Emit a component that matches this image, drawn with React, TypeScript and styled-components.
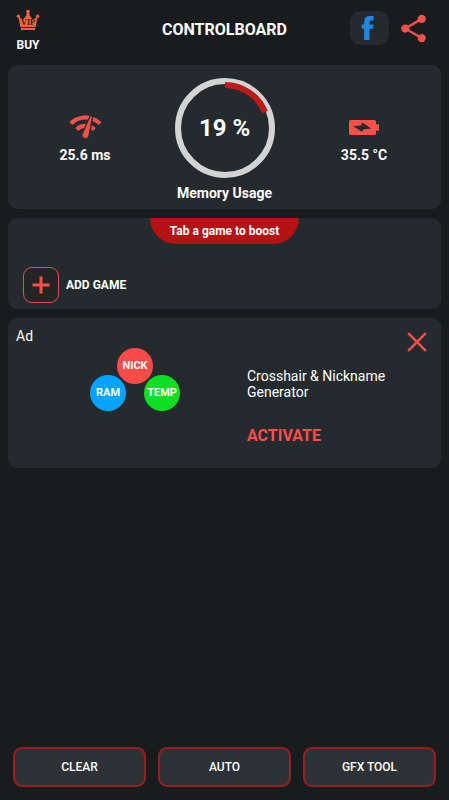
import React from "react";
import styled, { createGlobalStyle } from "styled-components";
import { MdNetworkCheck, MdShare } from "react-icons/md";

const GlobalStyle = createGlobalStyle`
  * { box-sizing: border-box; }
  body {
    margin: 0;
    background: #181c1f;
    color: #fff;
    font-family: Roboto, "Liberation Sans", sans-serif;
  }
  button { font: inherit; color: inherit; background: none; border: 0; padding: 0; cursor: pointer; }
  svg { display: block; }
`;

const Page = styled.div`
  min-height: 100vh;
  display: flex;
  flex-direction: column;
`;

const Header = styled.header`
  height: 65px;
  padding: 0 16px;
  display: grid;
  grid-template-columns: 1fr auto 1fr;
`;

const BuyButton = styled.button`
  justify-self: start;
  align-self: start;
  margin-top: 9px;
  display: flex;
  flex-direction: column;
  align-items: center;
  gap: 6px;
  font-size: 12px;
  line-height: 16px;
  font-weight: 700;
`;

const Title = styled.h1`
  margin: 19px 0 0;
  font-size: 16px;
  line-height: 21px;
  font-weight: 700;
`;

const HeaderActions = styled.div`
  justify-self: end;
  margin-top: 11px;
  height: 34px;
  display: flex;
  align-items: center;
  gap: 8px;
`;

const FacebookLink = styled.a`
  width: 39px;
  height: 34px;
  border-radius: 10px;
  background: #252a2e;
  display: grid;
  place-items: center;
`;

const ShareButton = styled.button`
  color: #f9504b;
  margin-right: 3px;
`;

const Cards = styled.main`
  flex: 1;
  padding: 0 8px;
  display: flex;
  flex-direction: column;
  gap: 9px;
`;

const Card = styled.section`
  background: #252a2e;
  border-radius: 9px;
`;

const StatsCard = styled(Card)`
  height: 144px;
  padding-top: 13px;
  display: grid;
  grid-template-columns: 154px 1fr 154px;
`;

const Stat = styled.div`
  padding-top: 31px;
  display: flex;
  flex-direction: column;
  align-items: center;
  gap: 2px;
  font-size: 14px;
  line-height: 18px;
  font-weight: 700;
  color: #fff;
  svg { color: #f9504b; }
`;

const Memory = styled.div`
  display: flex;
  flex-direction: column;
  align-items: center;
  gap: 6px;
  font-size: 14px;
  line-height: 18px;
  font-weight: 700;
`;

const Gauge = styled.div`
  display: grid;
  place-items: center;
  > * { grid-area: 1 / 1; }
`;

const GaugeValue = styled.span`
  font-size: 24px;
  line-height: 28px;
`;

const GameCard = styled(Card)`
  height: 91px;
  display: flex;
  flex-direction: column;
  justify-content: space-between;
  padding-bottom: 6px;
`;

const BoostLabel = styled.div`
  align-self: center;
  height: 26px;
  padding: 0 20px;
  border-radius: 0 0 26px 26px;
  background: #b31313;
  font-size: 12px;
  line-height: 27px;
  font-weight: 700;
`;

const AddGame = styled.button`
  align-self: flex-start;
  margin-left: 15px;
  display: flex;
  align-items: center;
  gap: 7px;
  font-size: 12px;
  font-weight: 700;
`;

const PlusBox = styled.span`
  width: 36px;
  height: 36px;
  border: 1px solid #e64c48;
  border-radius: 9px;
  background: #252424;
  display: grid;
  place-items: center;
`;

const AdCard = styled(Card)`
  height: 150px;
  display: grid;
  grid-template-columns: 1fr 194px;
  padding-left: 8px;
`;

const AdArt = styled.div`
  padding-top: 9px;
  font-size: 14px;
  line-height: 18px;
`;

const Bubbles = styled.div`
  margin: 3px 0 0 74px;
  width: 90px;
  display: grid;
  grid-template-columns: 36px 36px;
  grid-template-rows: 27px 36px;
  justify-content: space-between;
`;

const Bubble = styled.span<{ $color: string; $top?: boolean }>`
  width: 36px;
  height: 36px;
  border-radius: 50%;
  background: ${(p) => p.$color};
  ${(p) => p.$top && "grid-column: 1 / 3; justify-self: center;"}
  display: grid;
  place-items: center;
  font-size: 11px;
  font-weight: 700;
`;

const AdCopy = styled.div`
  display: flex;
  flex-direction: column;
  align-items: flex-start;
`;

const CloseButton = styled.button`
  align-self: flex-end;
  margin: 14px 14px 0 0;
`;

const AdText = styled.p`
  margin: 16px 0 0;
  max-width: 160px;
  font-size: 14px;
  line-height: 16px;
`;

const Activate = styled.button`
  margin-top: 26px;
  font-size: 16px;
  line-height: 20px;
  font-weight: 700;
  color: #f9504b;
`;

const BottomBar = styled.nav`
  padding: 0 13px 13px;
  display: grid;
  grid-template-columns: repeat(3, 1fr);
  gap: 12px;
`;

const BarButton = styled.button`
  height: 40px;
  border: 2px solid #9f1c1e;
  border-radius: 9px;
  background: #2d3236;
  font-size: 12px;
  font-weight: 500;
`;

const Crown = () => (
  <svg width="24" height="22" viewBox="0 0 24 22" fill="#f4633d" aria-hidden="true">
    <circle cx="12" cy="2.6" r="1.8" />
    <circle cx="2.4" cy="7.2" r="1.7" />
    <circle cx="21.6" cy="7.2" r="1.7" />
    <path d="M2.2 7.2 Q6.2 11.5 8 9.4 Q10.6 7.5 11 3.5 H13 Q13.4 7.5 16 9.4 Q17.8 11.5 21.8 7.2 L19.6 18 H4.4 Z" />
    <rect x="4.8" y="19" width="14.4" height="2" />
    <text x="12" y="16.2" textAnchor="middle" fontFamily="Liberation Serif, serif" fontWeight="700" fontSize="8" fill="#33211e">VIP</text>
  </svg>
);

const Facebook = () => (
  <svg width="18" height="26" viewBox="0 0 18 26" fill="#2187de" aria-hidden="true">
    <path d="M3.2 25 V13.8 H.7 V9.4 H3.2 V6.5 Q3.2 1 8.7 1 H12.6 V5.4 H10.2 Q8.5 5.4 8.5 7 V9.4 H12.6 L12.1 13.8 H8.5 V25 Z" />
  </svg>
);

const Battery = () => (
  <svg width="30" height="35" viewBox="0 0 30 35" aria-hidden="true">
    <path fill="currentColor" fillRule="evenodd" d="M1.5 11 H25.5 Q27 11 27 12.5 V15.3 H30 V21.7 H27 V24.5 Q27 26 25.5 26 H1.5 Q0 26 0 24.5 V12.5 Q0 11 1.5 11 Z M4 17 L13.2 23 L14 20.4 L22.3 19.6 L13.2 13.6 L12.2 16.6 Z" />
  </svg>
);

const Ring = ({ percent }: { percent: number }) => (
  <svg width="100" height="100" viewBox="0 0 100 100" fill="none" aria-hidden="true">
    <circle cx="50" cy="50" r="47" stroke="#d3d3d4" strokeWidth="6" />
    <circle cx="50" cy="50" r="43" stroke="#be1a1a" strokeWidth="6" pathLength="100" strokeDasharray={`${percent} 100`} transform="rotate(-90 50 50)" />
  </svg>
);

export default function App() {
  return (
    <Page>
      <GlobalStyle />
      <Header>
        <BuyButton><Crown />BUY</BuyButton>
        <Title>CONTROLBOARD</Title>
        <HeaderActions>
          <FacebookLink href="#facebook" aria-label="Facebook"><Facebook /></FacebookLink>
          <ShareButton aria-label="Share"><MdShare size={33} /></ShareButton>
        </HeaderActions>
      </Header>
      <Cards>
        <StatsCard>
          <Stat><MdNetworkCheck size={35} />25.6 ms</Stat>
          <Memory>
            <Gauge><Ring percent={19} /><GaugeValue>19 %</GaugeValue></Gauge>
            Memory Usage
          </Memory>
          <Stat><Battery />35.5 °C</Stat>
        </StatsCard>
        <GameCard>
          <BoostLabel>Tab a game to boost</BoostLabel>
          <AddGame>
            <PlusBox>
              <svg width="18" height="18" viewBox="0 0 18 18" stroke="#f9504b" strokeWidth="3" aria-hidden="true"><path d="M9 0.5V17.5M0.5 9H17.5" /></svg>
            </PlusBox>
            ADD GAME
          </AddGame>
        </GameCard>
        <AdCard>
          <AdArt>
            Ad
            <Bubbles>
              <Bubble $color="#f94b47" $top>NICK</Bubble>
              <Bubble $color="#04a3ff">RAM</Bubble>
              <Bubble $color="#0fdf24">TEMP</Bubble>
            </Bubbles>
          </AdArt>
          <AdCopy>
            <CloseButton aria-label="Close">
              <svg width="20" height="20" viewBox="0 0 20 20" stroke="#f9504b" strokeWidth="2.4" aria-hidden="true"><path d="M1.2 1.2L18.8 18.8M18.8 1.2L1.2 18.8" /></svg>
            </CloseButton>
            <AdText>Crosshair &amp; Nickname Generator</AdText>
            <Activate>ACTIVATE</Activate>
          </AdCopy>
        </AdCard>
      </Cards>
      <BottomBar>
        <BarButton>CLEAR</BarButton>
        <BarButton>AUTO</BarButton>
        <BarButton>GFX TOOL</BarButton>
      </BottomBar>
    </Page>
  );
}
